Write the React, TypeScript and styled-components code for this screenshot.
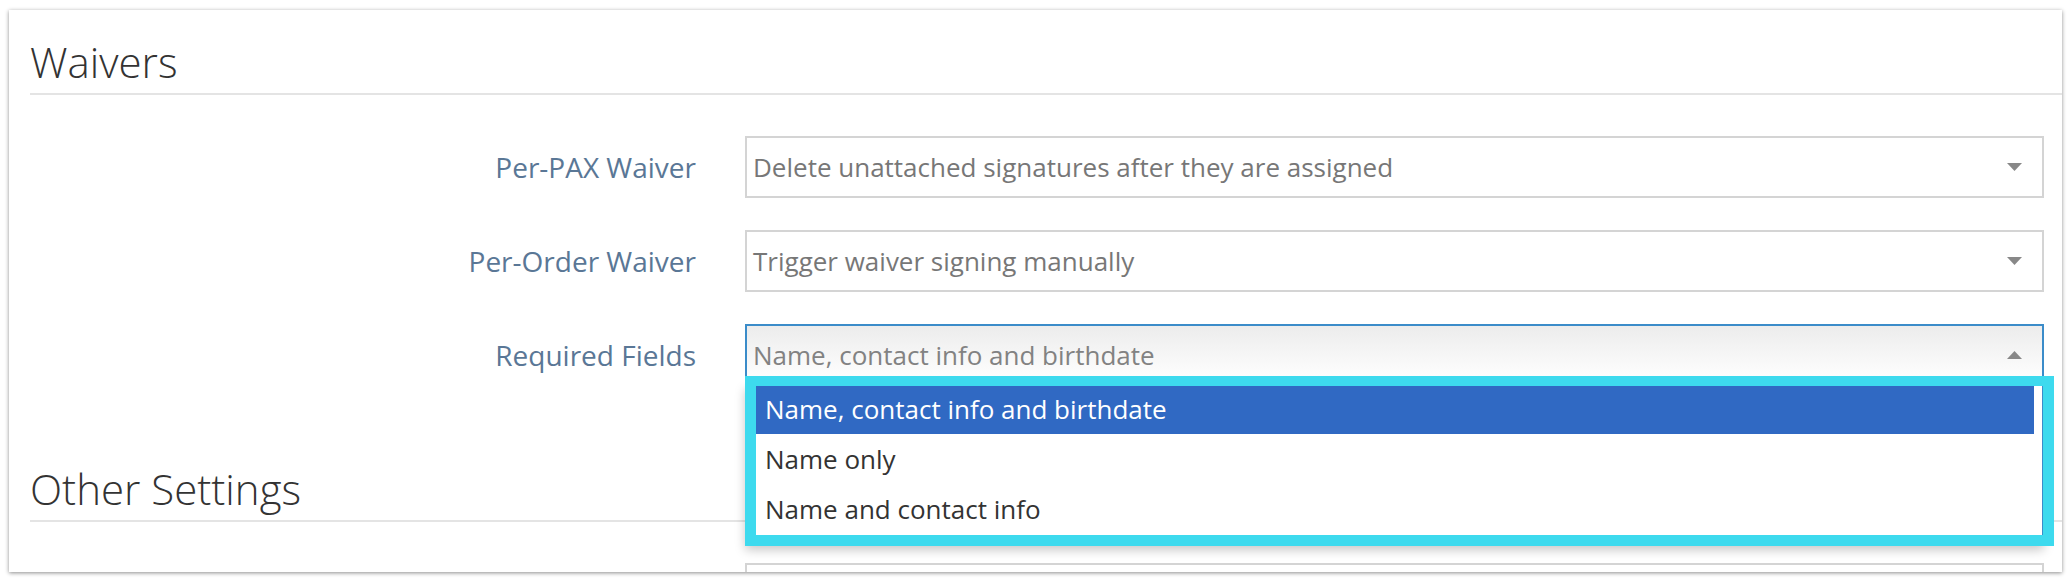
import React from 'react';
import styled, { createGlobalStyle } from 'styled-components';

const GlobalStyle = createGlobalStyle`
  html, body {
    margin: 0;
    padding: 0;
    background: #fff;
  }
  body {
    font-family: "Open Sans", "Noto Sans", sans-serif;
  }
`;

const Page = styled.div`
  width: 2072px;
  height: 582px;
  box-sizing: border-box;
  padding: 10px 0 0 9px;
`;

const Card = styled.div`
  width: 2053px;
  height: 562px;
  box-sizing: border-box;
  padding: 26px 0 0 21px;
  background: #fff;
  box-shadow: 0 1px 4px rgba(0, 0, 0, 0.45);
  overflow: hidden;
`;

const SectionTitle = styled.h2<{ $first?: boolean }>`
  margin: ${p => (p.$first ? '0' : '77px')} 0 0;
  padding: 0 0 5px;
  font-size: 42px;
  font-weight: 300;
  line-height: 52px;
  color: #333;
  border-bottom: 2px solid #e4e4e4;
`;

const Form = styled.div`
  display: grid;
  grid-template-columns: 666px 1fr;
  column-gap: 49px;
  row-gap: 32px;
  margin-top: 41px;
  padding-right: 18px;
`;

const Label = styled.div`
  align-self: center;
  text-align: right;
  font-size: 28px;
  color: #5a7796;
`;

const Select = styled.div<{ $open?: boolean }>`
  position: relative;
  display: flex;
  align-items: center;
  justify-content: space-between;
  height: 62px;
  box-sizing: border-box;
  padding: 0 20px 0 6px;
  border: 2px solid ${p => (p.$open ? '#3b8cc9' : '#d4d4d4')};
  background: ${p => (p.$open ? 'linear-gradient(#ececec, #fdfdfd 85%, #e6e6e6)' : '#fff')};
  font-size: 26px;
  color: ${p => (p.$open ? '#828282' : '#777')};
  z-index: ${p => (p.$open ? 2 : 1)};
`;

const Dropdown = styled.ul`
  position: absolute;
  top: 100%;
  left: -2px;
  right: -2px;
  margin: 0;
  padding: 0 8px 9px 9px;
  list-style: none;
  background: #fff;
  border: 2px solid #3b8cc9;
  border-top: 0;
  box-shadow: 0 5px 10px rgba(0, 0, 0, 0.22);
`;

const Option = styled.li<{ $active?: boolean }>`
  height: 50px;
  line-height: 50px;
  padding-left: 9px;
  font-size: 26px;
  color: ${p => (p.$active ? '#fff' : '#333')};
  background: ${p => (p.$active ? '#3069c3' : 'transparent')};
`;

// annotation frame drawn over the open list
const Highlight = styled.div`
  position: absolute;
  top: 50px;
  left: -2px;
  width: 1309px;
  height: 170px;
  box-sizing: border-box;
  border: 11px solid #3ddaee;
  border-top-width: 10px;
  pointer-events: none;
`;

const Caret = ({ up }: { up?: boolean }) => (
  <svg width="15" height="8" viewBox="0 0 15 8">
    <polygon points={up ? '0,8 15,8 7.5,0' : '0,0 15,0 7.5,8'} fill="#888" />
  </svg>
);

const requiredOptions = [
  'Name, contact info and birthdate',
  'Name only',
  'Name and contact info',
];

export default function App() {
  return (
    <Page>
      <GlobalStyle />
      <Card>
        <SectionTitle $first>Waivers</SectionTitle>
        <Form>
          <Label>Per-PAX Waiver</Label>
          <Select>
            <span>Delete unattached signatures after they are assigned</span>
            <Caret />
          </Select>

          <Label>Per-Order Waiver</Label>
          <Select>
            <span>Trigger waiver signing manually</span>
            <Caret />
          </Select>

          <Label>Required Fields</Label>
          <Select $open>
            <span>{requiredOptions[0]}</span>
            <Caret up />
            <Dropdown>
              {requiredOptions.map((o, i) => (
                <Option key={o} $active={i === 0}>
                  {o}
                </Option>
              ))}
            </Dropdown>
            <Highlight />
          </Select>
        </Form>

        <SectionTitle>Other Settings</SectionTitle>
        <Form>
          <Label />
          <Select />
        </Form>
      </Card>
    </Page>
  );
}
